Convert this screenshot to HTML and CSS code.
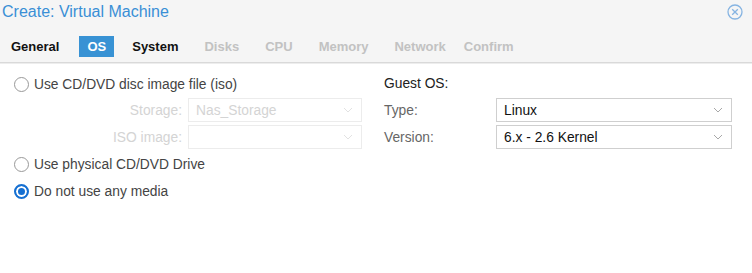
FILE: index.html
```html
<!doctype html>
<html lang="en">
<head>
  <meta charset="UTF-8">
  <meta name="viewport" content="width=device-width, initial-scale=1.0">
  <title>Create: Virtual Machine</title>
  <link rel="stylesheet" href="styles.css">
</head>
<body>
<div class="wizard">
  <div class="wizard-header">
    <div class="title-row">
      <span class="wizard-title">Create: Virtual Machine</span>
      <svg class="close-icon" width="16" height="16" viewBox="0 0 16 16">
        <circle cx="8" cy="8" r="7" fill="none" stroke="#86b4e2" stroke-width="1.3"/>
        <path d="M5.2 5.2 L10.8 10.8 M10.8 5.2 L5.2 10.8" stroke="#86b4e2" stroke-width="1.3"/>
      </svg>
    </div>
    <div class="tabs">
      <span class="tab tab-first">General</span>
      <span class="tab tab-active">OS</span>
      <span class="tab">System</span>
      <span class="tab tab-disabled">Disks</span>
      <span class="tab tab-disabled">CPU</span>
      <span class="tab tab-disabled">Memory</span>
      <span class="tab tab-disabled">Network</span>
      <span class="tab tab-disabled tab-last">Confirm</span>
    </div>
  </div>

  <div class="wizard-body">
    <div class="column">
      <label class="radio-row">
        <span class="radio"></span>
        Use CD/DVD disc image file (iso)
      </label>
      <div class="field-row field-row-left disabled">
        <span class="field-label">Storage:</span>
        <div class="select">
          <span>Nas_Storage</span>
          <svg class="chevron" width="10" height="6" viewBox="0 0 10 6"><path d="M1 1 L5 5 L9 1" fill="none" stroke="currentColor"/></svg>
        </div>
      </div>
      <div class="field-row field-row-left disabled">
        <span class="field-label">ISO image:</span>
        <div class="select">
          <span></span>
          <svg class="chevron" width="10" height="6" viewBox="0 0 10 6"><path d="M1 1 L5 5 L9 1" fill="none" stroke="currentColor"/></svg>
        </div>
      </div>
      <label class="radio-row">
        <span class="radio"></span>
        Use physical CD/DVD Drive
      </label>
      <label class="radio-row">
        <span class="radio radio-checked"></span>
        Do not use any media
      </label>
    </div>

    <div class="column">
      <div class="group-title">Guest OS:</div>
      <div class="field-row">
        <span class="field-label">Type:</span>
        <div class="select">
          <span>Linux</span>
          <svg class="chevron" width="10" height="6" viewBox="0 0 10 6"><path d="M1 1 L5 5 L9 1" fill="none" stroke="currentColor"/></svg>
        </div>
      </div>
      <div class="field-row">
        <span class="field-label">Version:</span>
        <div class="select">
          <span>6.x - 2.6 Kernel</span>
          <svg class="chevron" width="10" height="6" viewBox="0 0 10 6"><path d="M1 1 L5 5 L9 1" fill="none" stroke="currentColor"/></svg>
        </div>
      </div>
    </div>
  </div>
</div>
</body>
</html>
```

FILE: styles.css
```css
body {
  margin: 0;
  background: #fff;
  font-family: "Liberation Sans", Arial, sans-serif;
}

.wizard-header {
  background: #f5f5f5;
  padding-bottom: 5px;
  border-bottom: 1px solid #d9d9d9;
  box-shadow: 0 1px 0 #ededed;
}

.title-row {
  display: flex;
  align-items: center;
  justify-content: space-between;
  height: 24px;
  padding: 0 9px 0 2px;
}

.wizard-title {
  font-size: 16px;
  color: #3a8fd5;
}

.close-icon {
  display: block;
}

.tabs {
  display: flex;
  gap: 10px;
  margin-top: 12px;
  padding-left: 3px;
}

.tab {
  padding: 0 8px;
  line-height: 21px;
  font-size: 13px;
  font-weight: bold;
  color: #111;
}

.tab-first {
  margin-right: 2px;
}

.tab-last {
  margin-left: -8px;
}

.tab-active {
  background: #3892d4;
  color: #fff;
}

.tab-disabled {
  color: #c2c2c2;
}

.wizard-body {
  display: grid;
  grid-template-columns: 1fr 1fr;
  column-gap: 22px;
  padding: 10px 20px 0 14px;
  font-size: 13.8px;
}

.column {
  display: flex;
  flex-direction: column;
  gap: 3px;
}

.radio-row {
  display: flex;
  align-items: center;
  gap: 5px;
  height: 24px;
  color: #444;
}

.radio-row:first-child {
  height: 22px;
}

.radio {
  box-sizing: border-box;
  width: 15px;
  height: 15px;
  border: 1.5px solid #999;
  border-radius: 50%;
}

.radio-checked {
  border: 2px solid #1670d2;
  background: #1670d2;
  box-shadow: inset 0 0 0 2px #fff;
}

.group-title {
  height: 22px;
  line-height: 22px;
  color: #222;
}

.field-row {
  display: flex;
  align-items: center;
  height: 24px;
}

.field-label {
  width: 112px;
  flex: none;
  color: #666;
}

.field-row-left .field-label {
  width: 174px;
  box-sizing: border-box;
  padding-right: 6px;
  text-align: right;
}

.select {
  flex: 1;
  display: flex;
  align-items: center;
  justify-content: space-between;
  box-sizing: border-box;
  height: 24px;
  padding: 0 8px 0 7px;
  border: 1px solid #cfcfcf;
  color: #111;
}

.chevron {
  color: #a8a8a8;
}

.disabled .field-label,
.disabled .select {
  color: #d4d4d4;
}

.disabled .select {
  border-color: #ececec;
}

.disabled .chevron {
  color: #e2e2e2;
}
```
